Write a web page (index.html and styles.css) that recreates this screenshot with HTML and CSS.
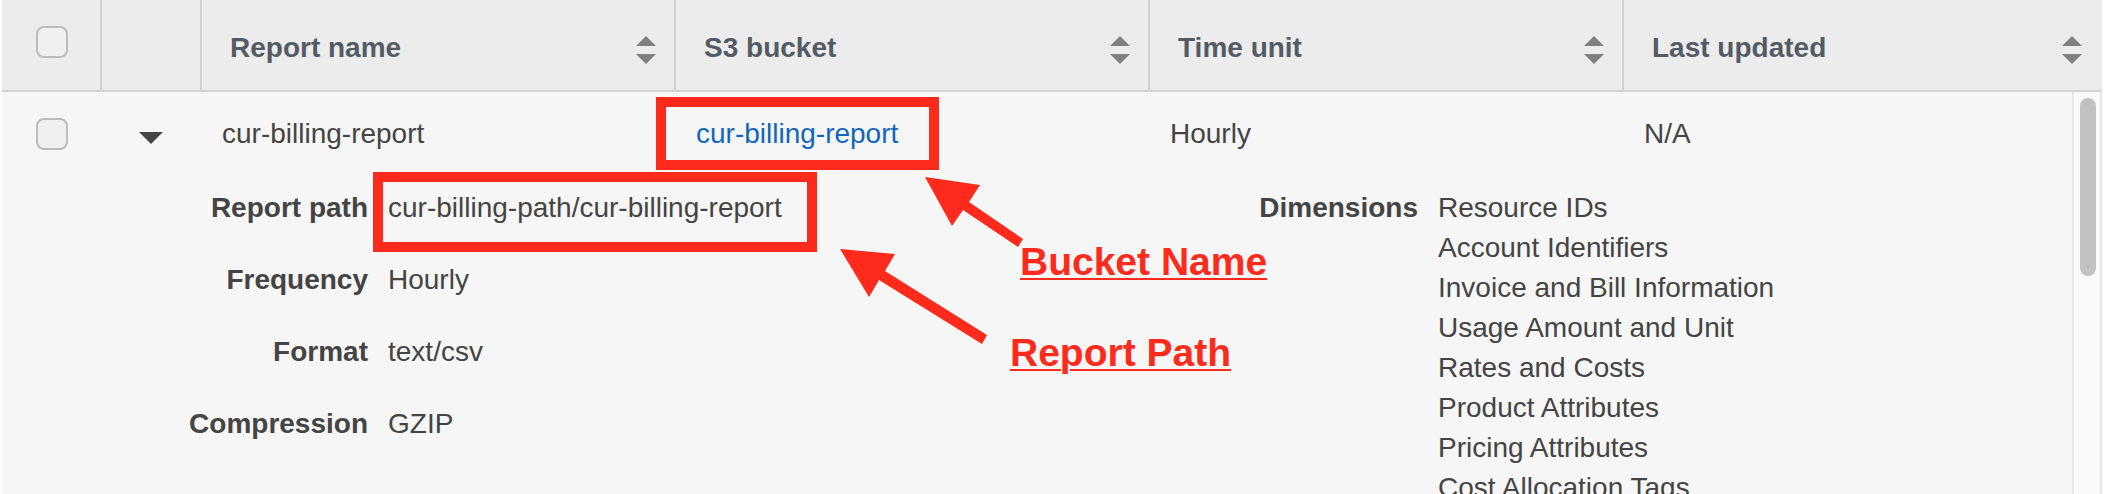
FILE: index.html
```
<!DOCTYPE html>
<html lang="en">
<head>
<meta charset="utf-8">
<title>Cost and usage reports</title>
<link rel="stylesheet" href="styles.css">
</head>
<body>
<main class="panel">
  <table class="reports">
    <colgroup>
      <col class="col-tool"><col class="col-tool"><col><col><col><col><col class="col-end">
    </colgroup>
    <thead>
      <tr>
        <th class="tool"><input class="check" type="checkbox" aria-label="Select all reports"></th>
        <th class="tool"></th>
        <th><button class="sort" type="button">Report name<svg class="sort-icon" viewBox="0 0 20 28" aria-hidden="true"><path d="M0 10L10 0L20 10ZM0 18H20L10 28Z"/></svg></button></th>
        <th><button class="sort" type="button">S3 bucket<svg class="sort-icon" viewBox="0 0 20 28" aria-hidden="true"><path d="M0 10L10 0L20 10ZM0 18H20L10 28Z"/></svg></button></th>
        <th><button class="sort" type="button">Time unit<svg class="sort-icon" viewBox="0 0 20 28" aria-hidden="true"><path d="M0 10L10 0L20 10ZM0 18H20L10 28Z"/></svg></button></th>
        <th class="last"><button class="sort" type="button">Last updated<svg class="sort-icon" viewBox="0 0 20 28" aria-hidden="true"><path d="M0 10L10 0L20 10ZM0 18H20L10 28Z"/></svg></button></th>
        <th class="last"></th>
      </tr>
    </thead>
    <tbody>
      <tr class="row">
        <td class="tool"><input class="check" type="checkbox" aria-label="Select cur-billing-report"></td>
        <td class="tool"><button class="expand" type="button" aria-label="Hide details" aria-expanded="true"><svg class="caret" viewBox="0 0 24 12" aria-hidden="true"><path d="M0 0H24L12 12Z"/></svg></button></td>
        <td>cur-billing-report</td>
        <td><a class="link" href="#bucket">cur-billing-report</a></td>
        <td>Hourly</td>
        <td>N/A</td>
        <td class="end"></td>
      </tr>
      <tr>
        <td class="details" colspan="7">
          <div class="halves">
            <dl class="facts">
              <dt>Report path</dt><dd>cur-billing-path/cur-billing-report</dd>
              <dt>Frequency</dt><dd>Hourly</dd>
              <dt>Format</dt><dd>text/csv</dd>
              <dt>Compression</dt><dd>GZIP</dd>
            </dl>
            <dl class="facts">
              <dt>Dimensions</dt>
              <dd>
                <ul class="dimensions">
                  <li>Resource IDs</li>
                  <li>Account Identifiers</li>
                  <li>Invoice and Bill Information</li>
                  <li>Usage Amount and Unit</li>
                  <li>Rates and Costs</li>
                  <li>Product Attributes</li>
                  <li>Pricing Attributes</li>
                  <li>Cost Allocation Tags</li>
                </ul>
              </dd>
            </dl>
          </div>
        </td>
      </tr>
    </tbody>
  </table>
  <div class="scrollbar"><div class="thumb"></div></div>
</main>

<div class="mark mark-bucket"></div>
<div class="mark mark-path"></div>
<svg class="arrows" width="200" height="180" viewBox="830 170 200 180" aria-hidden="true">
  <path d="M925 177L980 185L969 202L1023 239L1018 247L963 210L952 226Z"/>
  <path d="M840 249L895 254L885 271L987 335L982 344L879 280L869 297Z"/>
</svg>
<div class="note note-bucket">Bucket Name</div>
<div class="note note-path">Report Path</div>
</body>
</html>
```
FILE: styles.css
```
* {
  box-sizing: border-box;
}

body {
  margin: 0;
  height: 100vh;
  overflow: hidden;
  position: relative;
  background: #fff;
  color: #444;
  font: 28px/40px "Liberation Sans", Arial, sans-serif;
}

.panel {
  position: relative;
  height: 100%;
  margin: 0 6px 0 2px;
  overflow: hidden;
  background: #f6f6f6;
}

/* Table */
.reports {
  width: 100%;
  table-layout: fixed;
  border-collapse: separate;
  border-spacing: 0;
}

.col-tool {
  width: 100px;
}

.col-end {
  width: 4px;
}

th {
  padding: 0;
  vertical-align: top;
  background: #ececec;
  border-right: 2px solid #d3d3d3;
  border-bottom: 2px solid #d3d3d3;
}

th.last {
  border-right: 0;
}

th.tool {
  padding-top: 26px;
}

.sort {
  display: flex;
  align-items: center;
  justify-content: space-between;
  width: 100%;
  height: 90px;
  padding: 6px 18px 0 28px;
  border: 0;
  background: none;
  color: #545b64;
  font: inherit;
  font-weight: bold;
  text-align: left;
}

.last .sort {
  padding-right: 16px;
}

.sort-icon {
  width: 20px;
  height: 28px;
  margin-top: 4px;
  fill: #808080;
}

.row td {
  padding: 22px 0 12px 20px;
  vertical-align: top;
}

.row .tool {
  padding: 26px 2px 0 0;
  text-align: center;
}

.row .end {
  padding: 0;
}

.check {
  appearance: none;
  display: block;
  width: 32px;
  height: 32px;
  margin: 0 0 0 34px;
  border: 2px solid #bcbcbc;
  border-radius: 8px;
  background: #f0f0f0;
}

.expand {
  display: block;
  width: 24px;
  margin: 14px auto 0;
  padding: 0;
  border: 0;
  background: none;
}

.caret {
  display: block;
  width: 24px;
  height: 12px;
  fill: #444;
}

.link {
  color: #1166bb;
  text-decoration: none;
}

/* Expanded row */
.details {
  padding: 22px 0;
}

.halves {
  display: grid;
  grid-template-columns: 1fr 1fr;
}

.facts {
  display: grid;
  grid-template-columns: 366px 1fr;
  gap: 32px 20px;
  align-content: start;
  margin: 0;
}

.facts dt {
  font-weight: bold;
  text-align: right;
}

.facts dd {
  margin: 0;
}

.dimensions {
  margin: 0;
  padding: 0;
  list-style: none;
}

/* Scrollbar beside the rows */
.scrollbar {
  position: absolute;
  top: 92px;
  right: 0;
  bottom: 0;
  width: 30px;
  padding: 6px;
  border: solid #e8e8e8;
  border-width: 0 2px;
  background: #fafafa;
}

.thumb {
  width: 16px;
  height: 178px;
  border-radius: 8px;
  background: #c1c1c1;
}

/* Callouts drawn over the table */
.mark {
  position: absolute;
  border: 10px solid #fe2b1c;
}

.mark-bucket {
  left: 656px;
  top: 97px;
  width: 283px;
  height: 73px;
}

.mark-path {
  left: 373px;
  top: 172px;
  width: 444px;
  height: 80px;
}

.arrows {
  position: absolute;
  left: 830px;
  top: 170px;
  fill: #fe2b1c;
}

.note {
  position: absolute;
  color: #fe2b1c;
  font-size: 39px;
  font-weight: bold;
  text-decoration: underline 2px;
  text-underline-offset: 3px;
  white-space: nowrap;
}

.note-bucket {
  left: 1020px;
  top: 242px;
}

.note-path {
  left: 1010px;
  top: 333px;
}
```
